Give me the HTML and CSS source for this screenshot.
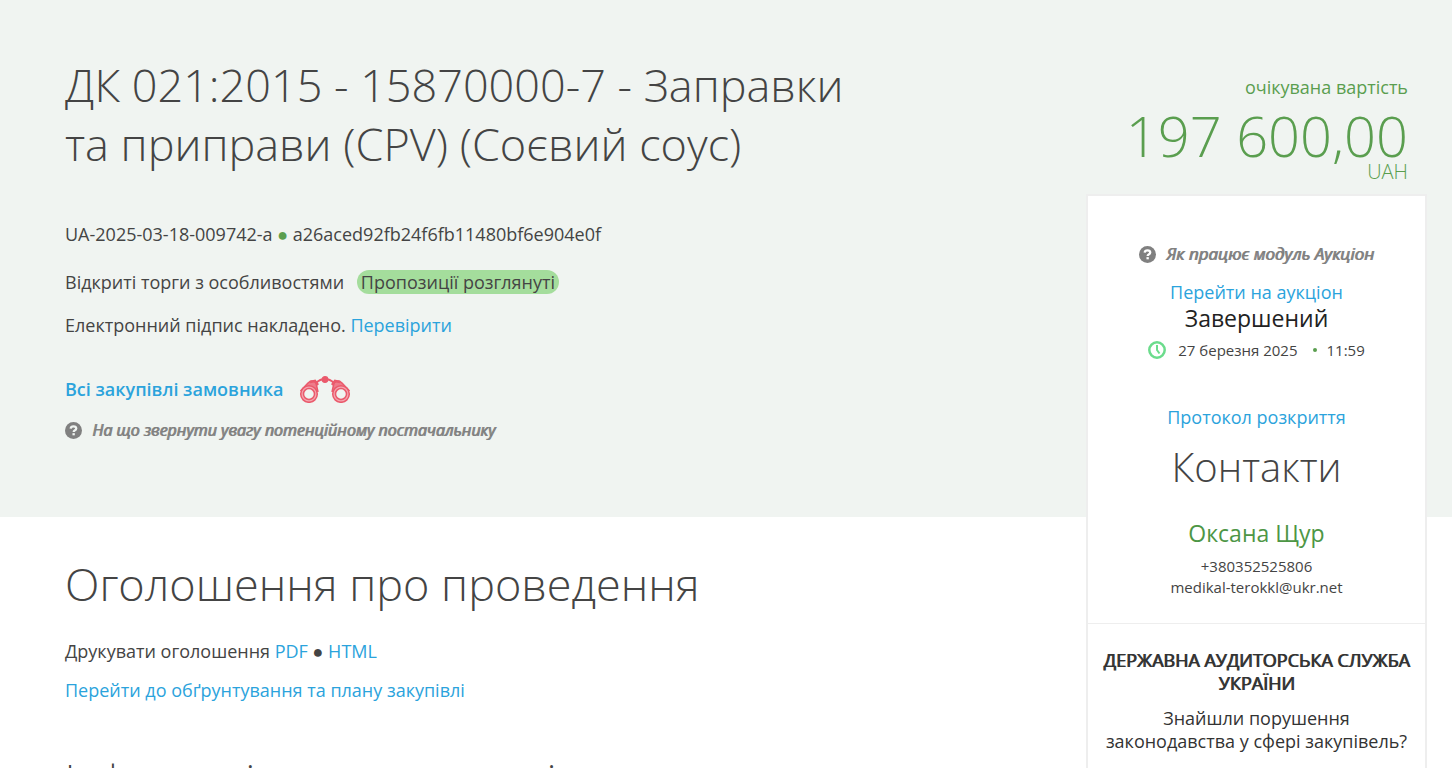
FILE: index.html
```html
<!DOCTYPE html>
<html lang="uk">
<head>
<meta charset="utf-8">
<meta name="viewport" content="width=device-width, initial-scale=1">
<title>ДК 021:2015 - 15870000-7 - Заправки та приправи</title>
<link rel="stylesheet" href="styles.css">
</head>
<body>
<div class="page">
  <header class="hero">
    <h1 class="title">ДК 021:2015 - 15870000-7 - Заправки та приправи (CPV) (Соєвий соус)</h1>
    <p class="codes">UA-2025-03-18-009742-a <span class="dot">●</span> a26aced92fb24f6fb11480bf6e904e0f</p>
    <p class="status">Відкриті торги з особливостями <span class="badge">Пропозиції розглянуті</span></p>
    <p class="signature">Електронний підпис накладено. <a href="#sign">Перевірити</a></p>
    <div class="buyer">
      <a class="buyer-link" href="#all">Всі закупівлі замовника</a>
      <svg class="binoculars" viewBox="0 0 52 28" fill="none" stroke="#ea5a6c" stroke-width="1.5" aria-hidden="true">
        <path d="M1.500 16 9 8Q13 4 17 8L19 17M50.500 16 43 8Q39 4 35 8L33 17" fill="#ee7c8a"/>
        <circle cx="10" cy="19" r="8.300" fill="#f4a5af"/><circle cx="42" cy="19" r="8.300" fill="#f4a5af"/>
        <circle cx="10" cy="19" r="5.500" fill="#f0f4f1"/><circle cx="42" cy="19" r="5.500" fill="#f0f4f1"/>
        <path d="M11 7 16 6 19 10M41 7 36 6 33 10" stroke-width="2.500"/>
        <path d="M17 8Q21 4 26 4T35 8" stroke-width="2"/>
        <circle cx="26" cy="4.500" r="2.700" fill="#ea5a6c"/>
      </svg>
    </div>
    <a class="hint hint-small" href="#tips">
      <svg class="help" viewBox="0 0 18 18" aria-hidden="true"><circle cx="9" cy="9" r="9" fill="currentColor"/><path d="M6 7Q6.300 4.600 9 4.600T11.900 6.800Q11.900 8.200 10.300 8.900 9.200 9.500 9.200 10.700" fill="none" stroke="#f0f4f1" stroke-width="2.400"/><path d="M7.900 11.800h2.500v2.300H7.900z" fill="#f0f4f1"/></svg>
      <span class="hint-text">На що звернути увагу потенційному постачальнику</span>
    </a>
  </header>

  <aside class="side">
    <div class="price">
      <div class="price-label">очікувана вартість</div>
      <div class="amount">197 600,00</div>
      <div class="currency">UAH</div>
    </div>
    <div class="card">
      <section class="auction">
        <a class="hint hint-center" href="#auction-help">
          <svg class="help" viewBox="0 0 18 18" aria-hidden="true"><circle cx="9" cy="9" r="9" fill="currentColor"/><path d="M6 7Q6.300 4.600 9 4.600T11.900 6.800Q11.900 8.200 10.300 8.900 9.200 9.500 9.200 10.700" fill="none" stroke="#fff" stroke-width="2.400"/><path d="M7.900 11.800h2.500v2.300H7.900z" fill="#fff"/></svg>
          <span class="hint-text">Як працює модуль Аукціон</span>
        </a>
        <a class="auction-link" href="#auction">Перейти на аукціон</a>
        <div class="state">Завершений</div>
        <div class="time">
          <svg class="clock" viewBox="0 0 18 18" fill="none" stroke="#6bdc8c" stroke-width="2.500" aria-hidden="true"><circle cx="9" cy="9" r="7.700"/><path d="M9 4V9L11.500 12.500" stroke-width="2"/></svg>
          <span>27 березня 2025</span><span class="time-dot"></span><span>11:59</span>
        </div>
        <a class="protocol" href="#protocol">Протокол розкриття</a>
        <h2 class="contacts-title">Контакти</h2>
        <div class="person">Оксана Щур</div>
        <div class="contact">+380352525806<br>medikal-terokkl@ukr.net</div>
      </section>
      <section class="audit">
        <h3 class="audit-title">ДЕРЖАВНА АУДИТОРСЬКА СЛУЖБА УКРАЇНИ</h3>
        <p class="audit-text">Знайшли порушення законодавства у сфері закупівель?</p>
      </section>
    </div>
  </aside>

  <main class="main">
    <h2 class="section-title">Оголошення про проведення</h2>
    <p class="print">Друкувати оголошення <a href="#pdf">PDF</a> ● <a href="#html">HTML</a></p>
    <p class="plan"><a href="#plan">Перейти до обґрунтування та плану закупівлі</a></p>
    <h2 class="info-title">Інформація про замовників</h2>
  </main>
</div>
</body>
</html>
```
FILE: styles.css
```css
* { box-sizing: border-box; }
body {
  margin: 0;
  background: #fff;
  color: #444;
  font: 18px/24px "Open Sans", "Noto Sans", sans-serif;
}
h1, h2, h3, p { margin: 0; }
a { color: #2ba3dc; text-decoration: none; }
.page {
  display: grid;
  grid-template-columns: minmax(0, 1fr) 341px;
  grid-template-rows: auto 1fr;
  padding-right: 25px;
  height: 100vh;
  overflow: hidden;
  background: #fff;
}
.hero {
  grid-column: 1 / -1;
  grid-row: 1;
  margin-right: -25px;
  padding: 55px 366px 75px 65px;
  background: #f0f4f1;
}
.title {
  max-width: 800px;
  margin-bottom: 49px;
  font-size: 45px;
  line-height: 59px;
  font-weight: 300;
}
.codes { margin-bottom: 24px; }
.dot { color: #5a9e4f; }
.status { margin-bottom: 19px; }
.badge {
  margin-left: 8px;
  padding: 0 4px;
  border-radius: 12px;
  background: #a4dd9c;
}
.buyer {
  display: flex;
  align-items: center;
  gap: 16px;
  margin: 38px 0 15px;
}
.buyer-link { font-weight: 600; }
.binoculars { width: 52px; height: 28px; }
.hint {
  display: flex;
  align-items: center;
  gap: 10px;
  color: #808080;
  font-size: 17px;
  font-style: italic;
}
.hint-small { font-size: 16px; }
.hint-text { text-shadow: 1px 0 currentColor; }
.help { width: 17px; height: 17px; flex: none; }
.side {
  grid-column: 2;
  grid-row: 1 / 3;
  display: flex;
  flex-direction: column;
  padding-top: 75px;
}
.price {
  padding: 0 19px 14px 0;
  color: #5a9e4f;
  text-align: right;
}
.price-label { margin-bottom: 7px; }
.amount { font-size: 56px; line-height: 58px; font-weight: 300; }
.currency { font-size: 20px; line-height: 16px; font-weight: 300; }
.card {
  flex: 1;
  border: 2px solid #eee;
  background: #fff;
  text-align: center;
}
.auction { padding: 46px 16px 25px; border-bottom: 1px solid #eee; }
.hint-center { justify-content: center; margin-bottom: 14px; }
.auction-link, .protocol { display: block; }
.state { color: #222; font-size: 23px; line-height: 28px; }
.time {
  display: flex;
  align-items: center;
  justify-content: center;
  margin: 6px 0 43px;
  font-size: 15px;
}
.clock { width: 18px; height: 18px; margin-right: 12px; }
.time-dot {
  width: 4px;
  height: 4px;
  margin: 0 10px 0 15px;
  border-radius: 50%;
  background: #5a9e4f;
}
.contacts-title { margin: 12px 0 25px; font-size: 40px; line-height: 52px; font-weight: 300; }
.person { margin-bottom: 8px; color: #4d9645; font-size: 23px; line-height: 30px; }
.contact { font-size: 15px; line-height: 21px; }
.audit { padding: 25px 12px; color: #333; line-height: 23px; }
.audit-title {
  margin-bottom: 12px;
  font-size: 18px;
  font-weight: 400;
  text-shadow: 1px 0 currentColor;
}
.main { grid-column: 1; grid-row: 2; min-height: 0; padding: 37px 40px 0 65px; }
.section-title {
  margin-bottom: 25px;
  font-size: 45px;
  line-height: 60px;
  font-weight: 300;
}
.print { margin-bottom: 15px; }
.info-title {
  margin-top: 50px;
  font-size: 40px;
  line-height: 54px;
  font-weight: 300;
}
```
